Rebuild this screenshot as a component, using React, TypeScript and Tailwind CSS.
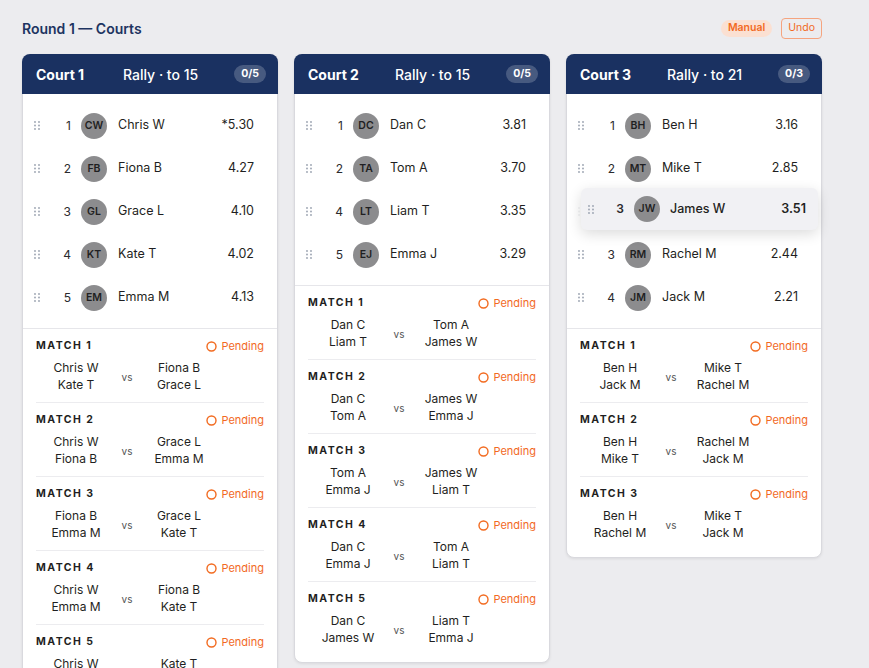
import React from 'react';

interface Player {
  seed: number;
  initials: string;
  name: string;
  rating: string;
  ghost?: boolean;
}
interface Match {
  a: [string, string];
  b: [string, string];
}
interface Court {
  name: string;
  format: string;
  done: string;
  players: Player[];
  matches: Match[];
  dragging?: Player;
}

const courts: Court[] = [
  {
    name: 'Court 1',
    format: 'Rally · to 15',
    done: '0/5',
    players: [
      { seed: 1, initials: 'CW', name: 'Chris W', rating: '*5.30' },
      { seed: 2, initials: 'FB', name: 'Fiona B', rating: '4.27' },
      { seed: 3, initials: 'GL', name: 'Grace L', rating: '4.10' },
      { seed: 4, initials: 'KT', name: 'Kate T', rating: '4.02' },
      { seed: 5, initials: 'EM', name: 'Emma M', rating: '4.13' }],

    matches: [
      { a: ['Chris W', 'Kate T'], b: ['Fiona B', 'Grace L'] },
      { a: ['Chris W', 'Fiona B'], b: ['Grace L', 'Emma M'] },
      { a: ['Fiona B', 'Emma M'], b: ['Grace L', 'Kate T'] },
      { a: ['Chris W', 'Emma M'], b: ['Fiona B', 'Kate T'] },
      { a: ['Chris W', 'Grace L'], b: ['Kate T', 'Emma M'] }]

  },
  {
    name: 'Court 2',
    format: 'Rally · to 15',
    done: '0/5',
    players: [
      { seed: 1, initials: 'DC', name: 'Dan C', rating: '3.81' },
      { seed: 2, initials: 'TA', name: 'Tom A', rating: '3.70' },
      { seed: 4, initials: 'LT', name: 'Liam T', rating: '3.35' },
      { seed: 5, initials: 'EJ', name: 'Emma J', rating: '3.29' }],

    matches: [
      { a: ['Dan C', 'Liam T'], b: ['Tom A', 'James W'] },
      { a: ['Dan C', 'Tom A'], b: ['James W', 'Emma J'] },
      { a: ['Tom A', 'Emma J'], b: ['James W', 'Liam T'] },
      { a: ['Dan C', 'Emma J'], b: ['Tom A', 'Liam T'] },
      { a: ['Dan C', 'James W'], b: ['Liam T', 'Emma J'] }]

  },
  {
    name: 'Court 3',
    format: 'Rally · to 21',
    done: '0/3',
    players: [
      { seed: 1, initials: 'BH', name: 'Ben H', rating: '3.16' },
      { seed: 2, initials: 'MT', name: 'Mike T', rating: '2.85' },
      { seed: 3, initials: 'JW', name: 'James W', rating: '3.51', ghost: true },
      { seed: 3, initials: 'RM', name: 'Rachel M', rating: '2.44' },
      { seed: 4, initials: 'JM', name: 'Jack M', rating: '2.21' }],

    matches: [
      { a: ['Ben H', 'Jack M'], b: ['Mike T', 'Rachel M'] },
      { a: ['Ben H', 'Mike T'], b: ['Rachel M', 'Jack M'] },
      { a: ['Ben H', 'Rachel M'], b: ['Mike T', 'Jack M'] }],

    dragging: { seed: 3, initials: 'JW', name: 'James W', rating: '3.51' }
  }];


function Grip() {
  return (
    <svg width="6" height="9" viewBox="0 0 6 9" className="text-gray-400 shrink-0">
      {[0, 1].map((c) =>
      [0, 1, 2].map((r) =>
      <circle key={`${c}-${r}`} cx={1 + c * 4} cy={1 + r * 3.5} r="0.9" fill="currentColor" />
      )
      )}
    </svg>);

}

function Avatar({ initials }: {initials: string;}) {
  return (
    <div className="w-[26px] h-[26px] rounded-full bg-[#8c8c8e] flex items-center justify-center text-[10.5px] font-semibold text-[#1f1f22] shrink-0">
      {initials}
    </div>);

}

function PlayerRow({ p }: {p: Player;}) {
  return (
    <div className={`h-[43px] flex items-center pl-[11px] pr-[23px] ${p.ghost ? 'opacity-15' : ''}`}>
      <Grip />
      <span className="w-[31px] text-right text-[12px] text-[#2a2a2e]">{p.seed}</span>
      <div className="ml-[10px]">
        <Avatar initials={p.initials} />
      </div>
      <span className="ml-[11px] flex-1 text-[12.5px] text-[#1f1f22]">{p.name}</span>
      <span className="text-[12.5px] text-[#1f1f22]">{p.rating}</span>
    </div>);

}

function DragOverlay({ p }: {p: Player;}) {
  return (
    <div className="absolute left-[14px] top-[94px] w-[237px] h-[42px] rounded-md bg-[#f1f1f4] shadow-[0_4px_14px_rgba(0,0,0,0.14)] flex items-center pl-[7px] pr-[12px]">
      <Grip />
      <span className="w-[30px] text-right text-[12px] font-semibold text-[#2a2a2e]">{p.seed}</span>
      <div className="ml-[10px]">
        <Avatar initials={p.initials} />
      </div>
      <span className="ml-[10px] flex-1 text-[12.5px] font-medium text-[#1f1f22]">{p.name}</span>
      <span className="text-[12.5px] font-semibold text-[#1f1f22]">{p.rating}</span>
    </div>);

}

function MatchBlock({ m, index, last }: {m: Match;index: number;last: boolean;}) {
  return (
    <div className={`pt-[10px] ${last ? 'pb-[10px]' : 'pb-[9px] border-b border-[#ececef]'}`}>
      <div className="flex items-center justify-between h-[14px]">
        <span className="text-[10.5px] font-bold tracking-[0.14em] text-[#1f1f22]">MATCH {index + 1}</span>
        <span className="flex items-center gap-[4px] text-[11px] text-[#f26a1f]">
          <svg width="11" height="11" viewBox="0 0 11 11">
            <circle cx="5.5" cy="5.5" r="4.5" fill="none" stroke="currentColor" strokeWidth="1.4" />
          </svg>
          Pending
        </span>
      </div>
      <div className="mt-[6px] grid grid-cols-[80px_22px_82px] items-center text-[12px] leading-[17px] text-[#1f1f22]">
        <div className="text-center">
          <div>{m.a[0]}</div>
          <div>{m.a[1]}</div>
        </div>
        <div className="text-center text-[10px] text-[#555] pt-[2px]">vs</div>
        <div className="text-center">
          <div>{m.b[0]}</div>
          <div>{m.b[1]}</div>
        </div>
      </div>
    </div>);

}

function CourtCard({ court }: {court: Court;}) {
  return (
    <div className="bg-white rounded-lg border border-[#d9d9de] shadow-[0_1px_3px_rgba(0,0,0,0.08)]">
      <div className="h-[40px] rounded-t-lg bg-[#1a3161] -mx-px -mt-px flex items-center pl-[14px] pr-[12px] text-white">
        <span className="w-[87px] text-[14px] font-bold">{court.name}</span>
        <span className="flex-1 text-[14px] font-medium">{court.format}</span>
        <span className="px-[7px] h-[18px] rounded-full bg-white/20 text-[10.5px] font-bold flex items-center">{court.done}</span>
      </div>
      <div className="relative pt-[10px] pb-[9px] border-b border-[#e6e6ea]">
        {court.players.map((p, i) =>
        <PlayerRow key={i} p={p} />
        )}
        {court.dragging && <DragOverlay p={court.dragging} />}
      </div>
      <div className="px-[13px] pb-[6px]">
        {court.matches.map((m, i) =>
        <MatchBlock key={i} m={m} index={i} last={i === court.matches.length - 1} />
        )}
      </div>
    </div>);

}

export default function App() {
  return (
    <div className="min-h-screen bg-[#ececef] font-['Inter',sans-serif]">
      <div className="w-[800px] ml-[22px] pt-[17px] pb-10">
        <div className="h-[22px] flex items-center justify-between mb-[15px]">
          <h1 className="text-[14px] font-semibold text-[#1d3461]">Round 1 — Courts</h1>
          <div className="flex items-center gap-[9px]">
            <span className="h-[17px] px-[7px] rounded-full bg-[#fbe0d2] text-[10.5px] font-semibold text-[#f26a1f] flex items-center">Manual</span>
            <button className="h-[21px] px-[6px] rounded border border-[#f5a47f] text-[10.5px] text-[#f26a1f] flex items-center">Undo</button>
          </div>
        </div>
        <div className="grid grid-cols-3 gap-4 items-start">
          {courts.map((c) =>
          <CourtCard key={c.name} court={c} />
          )}
        </div>
      </div>
    </div>);

}
